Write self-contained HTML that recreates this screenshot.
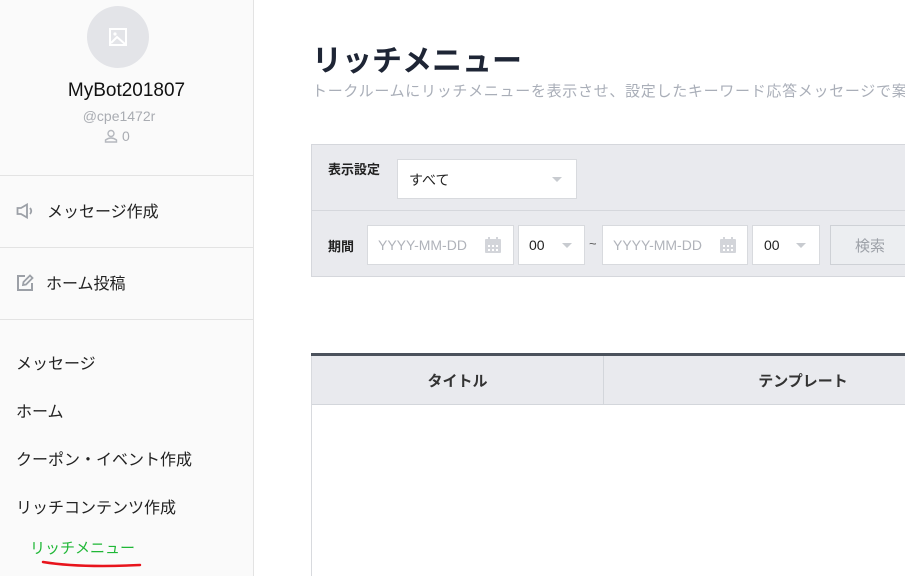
<!DOCTYPE html>
<html><head><meta charset="utf-8"><style>
*{box-sizing:border-box;margin:0;padding:0}
body{width:905px;height:576px;overflow:hidden;background:#fff;font-family:"Liberation Sans","Noto Sans CJK JP",sans-serif;position:relative;color:#222}
.abs{position:absolute;white-space:nowrap}
#side{position:absolute;left:0;top:0;width:254px;height:576px;background:#fafafa;border-right:1px solid #e3e3e3}
.hr{position:absolute;left:0;width:253px;height:1px;background:#e3e3e3}
.nav{font-size:16px;color:#222}
.box{position:absolute;background:#fff;border:1px solid #d8dade}
.ph{font-size:14px;color:#b0b3ba}
.arrow{position:absolute;width:0;height:0;border-left:5px solid transparent;border-right:5px solid transparent;border-top:5px solid #c8cbd0}
</style></head><body>
<div id="side">
 <div class="abs" style="left:87px;top:6px;width:62px;height:62px;border-radius:50%;background:#e3e4e8"></div>
 <svg class="abs" style="left:108px;top:27px" width="20" height="20" viewBox="0 0 20 20"><rect x="2" y="2" width="16" height="16" fill="none" stroke="#fff" stroke-width="2"/><circle cx="7" cy="7" r="1.6" fill="#fff"/><path d="M3 16 L9 10 L17 17" fill="none" stroke="#fff" stroke-width="2"/></svg>
 <div class="abs" style="left:0;width:253px;text-align:center;top:80px;font-size:19px;color:#111">MyBot201807</div>
 <div class="abs" style="left:0;width:238px;text-align:center;top:108px;font-size:14px;color:#a9acb2">@cpe1472r</div>
 <svg class="abs" style="left:104px;top:129px" width="14" height="14" viewBox="0 0 14 14"><circle cx="7" cy="4.5" r="3" fill="none" stroke="#b5b8be" stroke-width="1.4"/><path d="M1.5 13 V11 Q7 7 12.5 11 V13 Z" fill="none" stroke="#b5b8be" stroke-width="1.4"/></svg>
 <div class="abs" style="left:122px;top:128px;font-size:14px;color:#a9acb2">0</div>
 <div class="hr" style="top:175px"></div>
 <svg class="abs" style="left:16px;top:203px" width="19" height="16" viewBox="0 0 19 16"><path d="M1.5 5 H5 L11 1.5 V14.5 L5 11 H1.5 Z" fill="none" stroke="#9ca0a7" stroke-width="1.8"/><path d="M14 5 Q16.5 8 14 11" fill="none" stroke="#9ca0a7" stroke-width="1.8"/></svg>
 <div class="abs nav" style="left:47px;top:198px">メッセージ作成</div>
 <div class="hr" style="top:247px"></div>
 <svg class="abs" style="left:16px;top:274px" width="18" height="18" viewBox="0 0 18 18"><path d="M9 2 H2 V16 H16 V9" fill="none" stroke="#9ca0a7" stroke-width="2"/><path d="M7 11 L7.5 8 L14 1.5 L16.5 4 L10 10.5 Z" fill="none" stroke="#9ca0a7" stroke-width="1.8"/></svg>
 <div class="abs nav" style="left:46px;top:270px">ホーム投稿</div>
 <div class="hr" style="top:319px"></div>
 <div class="abs nav" style="left:16px;top:350px">メッセージ</div>
 <div class="abs nav" style="left:16px;top:398px">ホーム</div>
 <div class="abs nav" style="left:16px;top:446px">クーポン・イベント作成</div>
 <div class="abs nav" style="left:16px;top:494px">リッチコンテンツ作成</div>
 <div class="abs" style="left:30px;top:537px;font-size:15px;color:#1fb736">リッチメニュー</div>
 <svg class="abs" style="left:40px;top:559px" width="105" height="12" viewBox="0 0 105 12"><path d="M3 3 Q40 9 100 6" fill="none" stroke="#e8141c" stroke-width="2.5" stroke-linecap="round"/></svg>
</div>

<div class="abs" style="left:312px;top:36px;font-size:30px;font-weight:bold;color:#1e2535">リッチメニュー</div>
<div class="abs" style="left:312px;top:80px;font-size:15px;letter-spacing:0.7px;color:#a9aeb8">トークルームにリッチメニューを表示させ、設定したキーワード応答メッセージで案内</div>

<div class="abs" style="left:311px;top:144px;width:600px;height:133px;background:#e9eaee;border:1px solid #d5d7dc"></div>
<div class="abs" style="left:311px;top:210px;width:600px;height:1px;background:#d5d7dc"></div>
<div class="abs" style="left:328px;top:159px;font-size:13px;font-weight:bold;color:#222">表示設定</div>
<div class="box" style="left:397px;top:159px;width:180px;height:40px"></div>
<div class="abs" style="left:409px;top:170px;font-size:14px;color:#222">すべて</div>
<div class="arrow" style="left:552px;top:177px"></div>

<div class="abs" style="left:328px;top:236px;font-size:13px;font-weight:bold;color:#222">期間</div>
<div class="box" style="left:367px;top:225px;width:147px;height:40px"></div>
<div class="abs ph" style="left:378px;top:237px">YYYY-MM-DD</div>
<svg class="abs" style="left:484px;top:236px" width="18" height="18" viewBox="0 0 18 18"><rect x="1" y="3" width="16" height="14" rx="1" fill="#d3d5da"/><rect x="4" y="1" width="2" height="4" fill="#d3d5da"/><rect x="12" y="1" width="2" height="4" fill="#d3d5da"/><g fill="#fff"><rect x="4" y="9" width="2" height="2"/><rect x="8" y="9" width="2" height="2"/><rect x="12" y="9" width="2" height="2"/><rect x="4" y="13" width="2" height="2"/><rect x="8" y="13" width="2" height="2"/><rect x="12" y="13" width="2" height="2"/></g></svg>
<div class="box" style="left:518px;top:225px;width:67px;height:40px"></div>
<div class="abs" style="left:529px;top:237px;font-size:14px;color:#222">00</div>
<div class="arrow" style="left:562px;top:243px"></div>
<div class="abs" style="left:589px;top:236px;font-size:13px;color:#555">~</div>
<div class="box" style="left:602px;top:225px;width:146px;height:40px"></div>
<div class="abs ph" style="left:613px;top:237px">YYYY-MM-DD</div>
<svg class="abs" style="left:719px;top:236px" width="18" height="18" viewBox="0 0 18 18"><rect x="1" y="3" width="16" height="14" rx="1" fill="#d3d5da"/><rect x="4" y="1" width="2" height="4" fill="#d3d5da"/><rect x="12" y="1" width="2" height="4" fill="#d3d5da"/><g fill="#fff"><rect x="4" y="9" width="2" height="2"/><rect x="8" y="9" width="2" height="2"/><rect x="12" y="9" width="2" height="2"/><rect x="4" y="13" width="2" height="2"/><rect x="8" y="13" width="2" height="2"/><rect x="12" y="13" width="2" height="2"/></g></svg>
<div class="box" style="left:752px;top:225px;width:68px;height:40px"></div>
<div class="abs" style="left:764px;top:237px;font-size:14px;color:#222">00</div>
<div class="arrow" style="left:796px;top:243px"></div>
<div class="abs" style="left:830px;top:225px;width:90px;height:40px;background:#eceef1;border:1px solid #ced1d6"></div>
<div class="abs" style="left:855px;top:235px;font-size:15px;color:#9ea2a9">検索</div>

<div class="abs" style="left:311px;top:353px;width:600px;height:3px;background:#4b525c"></div>
<div class="abs" style="left:311px;top:356px;width:600px;height:49px;background:#e9eaee;border-bottom:1px solid #d3d6db"></div>
<div class="abs" style="left:603px;top:356px;width:1px;height:48px;background:#d3d6db"></div>
<div class="abs" style="left:311px;top:356px;width:1px;height:220px;background:#d8dade"></div>
<div class="abs" style="left:312px;top:370px;width:291px;text-align:center;font-size:15px;font-weight:bold;color:#333">タイトル</div>
<div class="abs" style="left:604px;top:370px;width:398px;text-align:center;font-size:15px;font-weight:bold;color:#333">テンプレート</div>
</body></html>
